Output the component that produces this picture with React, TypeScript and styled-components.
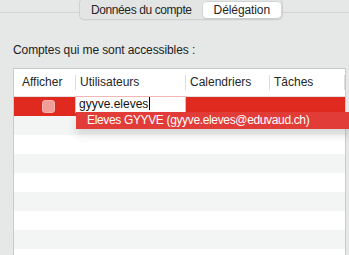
import React from 'react'
import styled, { createGlobalStyle } from 'styled-components'

const GlobalStyle = createGlobalStyle`
  body {
    margin: 0;
    background: #e6e8e8;
    font-family: 'Liberation Sans', Arial, sans-serif;
    color: #222;
  }
`

const Page = styled.div`
  width: 349px;
  height: 255px;
  overflow: hidden;
  display: flex;
  flex-direction: column;
`

const TabBar = styled.div`
  display: flex;
  align-items: flex-start;
  margin-top: -2px;
`

const Rule = styled.div<{ $width?: number }>`
  flex: ${(p) => (p.$width ? `0 0 ${p.$width}px` : '1')};
  height: 1px;
  margin-top: 14px;
  background: #d3d5d5;
`

const Segmented = styled.div`
  display: flex;
  align-items: center;
  height: 20px;
  padding: 0 1px;
  border: 1px solid #cfd1d1;
  border-radius: 5px;
  background: #e3e5e5;
  box-shadow: 0 0.5px 0 rgba(0, 0, 0, 0.05);
`

const Tab = styled.div<{ $active?: boolean }>`
  height: 16px;
  line-height: 16px;
  padding: ${(p) => (p.$active ? '0 11px' : '0 11px 0 10px')};
  font-size: 12px;
  letter-spacing: ${(p) => (p.$active ? '-0.1px' : '-0.4px')};
  color: #262626;
  border-radius: 4px;
  background: ${(p) => (p.$active ? '#ffffff' : 'transparent')};
  box-shadow: ${(p) => (p.$active ? '0 0 0 0.5px #c4c6c6, 0 1px 1px rgba(0,0,0,0.08)' : 'none')};
  margin-top: 2px;
`

const Caption = styled.div`
  font-size: 12px;
  letter-spacing: -0.1px;
  color: #222;
  margin: 22px 0 0 13px;
  height: 16px;
  line-height: 16px;
`

const Table = styled.div`
  position: relative;
  margin: 10px 0 0 13px;
  width: 331px;
  height: 185px;
  border: 1px solid #c9cbcb;
  background: #fff;
`

const Columns = `61px 110px 84px 1fr`

const HeaderRow = styled.div`
  display: grid;
  grid-template-columns: ${Columns};
  height: 27px;
  border-bottom: 1px solid #e2e2e2;
  align-items: center;
`

const HeaderCell = styled.div<{ $first?: boolean }>`
  height: 15px;
  line-height: 15px;
  font-size: 12px;
  color: #262626;
  padding-left: ${(p) => (p.$first ? '8px' : '4px')};
  border-left: ${(p) => (p.$first ? 'none' : '1px solid #dcdcdc')};
`

const LastSep = styled.div`
  position: absolute;
  right: 0;
  top: 6px;
  width: 1px;
  height: 15px;
  background: #dcdcdc;
`

const Row = styled.div<{ $kind: 'selected' | 'even' | 'odd' }>`
  display: grid;
  grid-template-columns: ${Columns};
  height: 19px;
  background: ${(p) =>
    p.$kind === 'selected' ? '#e02a20' : p.$kind === 'odd' ? '#f3f4f4' : '#ffffff'};
`

const CheckCell = styled.div`
  display: flex;
  align-items: center;
  justify-content: center;
  padding-left: 7px;
`

const Checkbox = styled.div`
  width: 11px;
  height: 11px;
  border-radius: 3px;
  background: #f19e99;
  border: 0.5px solid #f4b2ae;
`

const UserCell = styled.div`
  position: relative;
`

const EditField = styled.div`
  position: absolute;
  left: 0;
  top: -1px;
  width: 106px;
  height: 15px;
  background: #fff;
  border: 1px solid #f0b8b4;
  font-size: 12px;
  line-height: 15px;
  padding-left: 3px;
  color: #111;
`

const Caret = styled.span`
  display: inline-block;
  width: 1px;
  height: 13px;
  background: #000;
  vertical-align: -2px;
  margin-left: 1px;
`

const Suggestion = styled.div`
  position: absolute;
  left: 62px;
  top: 43px;
  width: 276px;
  height: 17px;
  background: #e23c38;
  color: #fff;
  font-size: 12px;
  letter-spacing: -0.35px;
  line-height: 17px;
  padding-left: 11px;
  box-sizing: border-box;
  box-shadow: 0 6px 10px rgba(0, 0, 0, 0.12);
  z-index: 2;
`

const rows = ['odd', 'even', 'odd', 'even', 'odd', 'even', 'odd', 'even'] as const

export default function App() {
  return (
    <Page>
      <GlobalStyle />
      <TabBar>
        <Rule />
        <Segmented>
          <Tab>Données du compte</Tab>
          <Tab $active>Délégation</Tab>
        </Segmented>
        <Rule $width={66} />
      </TabBar>
      <Caption>Comptes qui me sont accessibles :</Caption>
      <Table>
        <HeaderRow>
          <HeaderCell $first>Afficher</HeaderCell>
          <HeaderCell>Utilisateurs</HeaderCell>
          <HeaderCell>Calendriers</HeaderCell>
          <HeaderCell>Tâches</HeaderCell>
        </HeaderRow>
        <LastSep />
        <Row $kind="selected">
          <CheckCell>
            <Checkbox />
          </CheckCell>
          <UserCell>
            <EditField>
              gyyve.eleves
              <Caret />
            </EditField>
          </UserCell>
          <div />
          <div />
        </Row>
        {rows.map((k, i) => (
          <Row key={i} $kind={k} />
        ))}
        <Suggestion>Eleves GYYVE (gyyve.eleves@eduvaud.ch)</Suggestion>
      </Table>
    </Page>
  )
}
